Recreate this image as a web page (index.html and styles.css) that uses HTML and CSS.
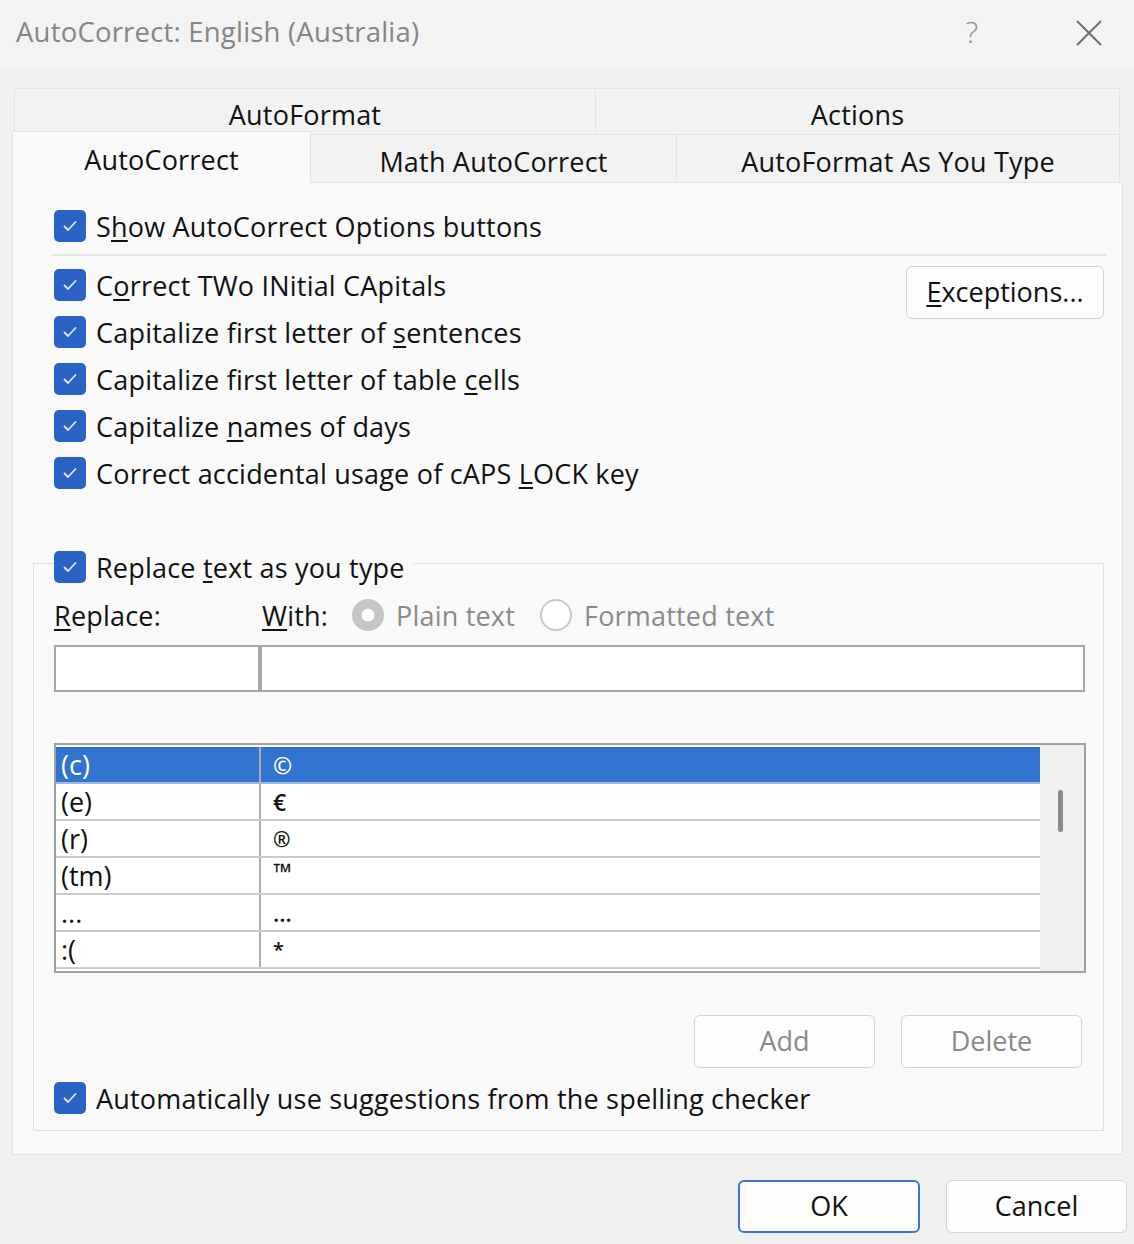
FILE: index.html
```html
<!DOCTYPE html>
<html lang="en">
<head>
<meta charset="utf-8">
<title>AutoCorrect: English (Australia)</title>
<link rel="stylesheet" href="styles.css">
</head>
<body>
<div class="dialog">
  <header class="titlebar">
    <span class="title">AutoCorrect: English (Australia)</span>
    <span class="help">?</span>
    <span class="close"><svg width="26" height="26" viewBox="0 0 26 26"><path d="M1 1 L25 25 M25 1 L1 25" stroke="#6f6f6f" stroke-width="2" fill="none"/></svg></span>
  </header>

  <div class="tabs">
    <div class="tabrow back">
      <div class="tab t-af">AutoFormat</div>
      <div class="tab t-act">Actions</div>
    </div>
    <div class="tabrow front">
      <div class="tab sel t-ac">AutoCorrect</div>
      <div class="tab t-math">Math AutoCorrect</div>
      <div class="tab t-afy">AutoFormat As You Type</div>
    </div>
  </div>

  <section class="panel">
    <div class="row">
      <span class="box"><svg width="32" height="32" viewBox="0 0 32 32"><polyline points="10.5,16.5 14,20 21.5,12" fill="none" stroke="#dfe9fb" stroke-width="1.8" stroke-linecap="round" stroke-linejoin="round"/></svg></span>
      <span>S<u>h</u>ow AutoCorrect Options buttons</span>
    </div>
    <div class="sep"></div>

    <div class="options">
      <div class="opt-list">
        <div class="row">
          <span class="box"><svg width="32" height="32" viewBox="0 0 32 32"><polyline points="10.5,16.5 14,20 21.5,12" fill="none" stroke="#dfe9fb" stroke-width="1.8" stroke-linecap="round" stroke-linejoin="round"/></svg></span>
          <span>C<u>o</u>rrect TWo INitial CApitals</span>
        </div>
        <div class="row">
          <span class="box"><svg width="32" height="32" viewBox="0 0 32 32"><polyline points="10.5,16.5 14,20 21.5,12" fill="none" stroke="#dfe9fb" stroke-width="1.8" stroke-linecap="round" stroke-linejoin="round"/></svg></span>
          <span>Capitalize first letter of <u>s</u>entences</span>
        </div>
        <div class="row">
          <span class="box"><svg width="32" height="32" viewBox="0 0 32 32"><polyline points="10.5,16.5 14,20 21.5,12" fill="none" stroke="#dfe9fb" stroke-width="1.8" stroke-linecap="round" stroke-linejoin="round"/></svg></span>
          <span>Capitalize first letter of table <u>c</u>ells</span>
        </div>
        <div class="row">
          <span class="box"><svg width="32" height="32" viewBox="0 0 32 32"><polyline points="10.5,16.5 14,20 21.5,12" fill="none" stroke="#dfe9fb" stroke-width="1.8" stroke-linecap="round" stroke-linejoin="round"/></svg></span>
          <span>Capitalize <u>n</u>ames of days</span>
        </div>
        <div class="row">
          <span class="box"><svg width="32" height="32" viewBox="0 0 32 32"><polyline points="10.5,16.5 14,20 21.5,12" fill="none" stroke="#dfe9fb" stroke-width="1.8" stroke-linecap="round" stroke-linejoin="round"/></svg></span>
          <span>Correct accidental usage of cAPS <u>L</u>OCK key</span>
        </div>
      </div>
      <button class="btn exc"><u>E</u>xceptions...</button>
    </div>

    <fieldset class="group">
      <legend class="legend">
        <span class="box"><svg width="32" height="32" viewBox="0 0 32 32"><polyline points="10.5,16.5 14,20 21.5,12" fill="none" stroke="#dfe9fb" stroke-width="1.8" stroke-linecap="round" stroke-linejoin="round"/></svg></span>
        <span>Replace <u>t</u>ext as you type</span>
      </legend>

      <div class="with-row">
        <span class="lbl-replace"><u>R</u>eplace:</span>
        <span class="lbl-with"><u>W</u>ith:</span>
        <span class="radio-opt r1"><span class="radio on"></span><span class="dim">Plain text</span></span>
        <span class="radio-opt"><span class="radio"></span><span class="dim">Formatted text</span></span>
      </div>

      <div class="inputs">
        <div class="in in1"></div>
        <div class="in in2"></div>
      </div>

      <div class="list">
        <div class="list-rows">
          <div class="lrow selected"><span class="c1">(c)</span><span class="c2 sym">©</span></div>
          <div class="lrow"><span class="c1">(e)</span><span class="c2 sym">€</span></div>
          <div class="lrow"><span class="c1">(r)</span><span class="c2 sym reg">®</span></div>
          <div class="lrow"><span class="c1">(tm)</span><span class="c2 sym tm">™</span></div>
          <div class="lrow"><span class="c1">...</span><span class="c2 sym">…</span></div>
          <div class="lrow"><span class="c1">:(</span><span class="c2 sym star">*</span></div>
        </div>
        <div class="scroll"><div class="thumb"></div></div>
      </div>

      <div class="btns">
        <button class="btn dis">Add</button>
        <button class="btn dis">Delete</button>
      </div>

      <div class="row auto-row">
        <span class="box"><svg width="32" height="32" viewBox="0 0 32 32"><polyline points="10.5,16.5 14,20 21.5,12" fill="none" stroke="#dfe9fb" stroke-width="1.8" stroke-linecap="round" stroke-linejoin="round"/></svg></span>
        <span>Automatically use su<u>g</u>gestions from the spelling checker</span>
      </div>
    </fieldset>
  </section>

  <footer class="footer">
    <button class="btn ok">OK</button>
    <button class="btn">Cancel</button>
  </footer>
</div>
</body>
</html>
```

FILE: styles.css
```css
* { box-sizing: border-box; }

body {
  margin: 0;
  background: #f0f0f0;
  font-family: "Open Sans", "Noto Sans", sans-serif;
  font-size: 27px;
  letter-spacing: 0.2px;
  color: #111;
}

.dialog {
  width: 1134px;
  height: 1244px;
  overflow: hidden;
}

u { text-underline-offset: 3px; text-decoration-thickness: 2px; }

/* Title bar */
.titlebar {
  height: 70px;
  background: #f3f3f3;
  display: flex;
  align-items: center;
  padding: 0 32px 8px 16px;
}
.title {
  flex: 1;
  color: #858585;
  font-size: 27.5px;
}
.help {
  width: 40px;
  text-align: center;
  color: #8f8f8f;
  font-size: 30px;
  font-weight: 300;
  margin-right: 84px;
}
.close { display: flex; width: 26px; height: 26px; margin-top: 4px; }

/* Tabs */
.tabs {
  margin-top: 18px;
  padding-left: 12px;
}
.tabrow { display: flex; }
.back { margin-left: 2px; height: 46px; }
.front { height: 48px; }
.tab {
  display: flex;
  align-items: center;
  justify-content: center;
  background: #f2f2f2;
  border-top: 1px solid #e3e3e3;
  border-right: 1px solid #e3e3e3;
  padding-top: 6px;
  color: #111;
}
.t-af { width: 582px; border-left: 1px solid #e3e3e3; }
.t-act { width: 524px; }
.t-ac { width: 299px; }
.t-math { width: 366px; }
.t-afy { width: 443px; }
.tab.sel {
  background: #f9f9f9;
  border: 1px solid #e1e1e1;
  border-bottom: none;
  margin-top: -3px;
  height: 52px;
  padding-top: 4px;
  padding-bottom: 0;
  position: relative;
  z-index: 1;
}

/* Panel */
.panel {
  margin-left: 12px;
  width: 1111px;
  height: 973px;
  background: #f9f9f9;
  border: 1px solid #e1e1e1;
  padding: 27px 15px 0 41px;
}

.row {
  display: flex;
  align-items: center;
  height: 32px;
  gap: 10px;
  white-space: nowrap;
}
.box {
  width: 32px;
  height: 32px;
  flex: none;
  border-radius: 5px;
  background: #2b62c5;
  display: flex;
}

.sep {
  height: 2px;
  background: #e4e4e4;
  margin: 12px 0 10px -2px;
}

.options {
  display: flex;
  justify-content: space-between;
  align-items: flex-start;
}
.opt-list {
  display: flex;
  flex-direction: column;
  gap: 15px;
  padding-top: 3px;
}

.btn {
  font: inherit;
  color: #111;
  background: #fdfdfd;
  border: 1px solid #d3d3d3;
  border-radius: 6px;
  height: 53px;
  width: 181px;
  padding: 0 0 3px;
}
.exc { width: 198px; margin-right: 3px; }
.btn.dis { color: #8a8a8a; }
.btn.ok { border: 2px solid #3c74cf; width: 182px; }

/* Group box */
.group {
  margin: 54px 3px 0 -21px;
  padding: 0 17px 16px 20px;
  border: 1px solid #dedede;
  min-width: 0;
}
.legend {
  display: flex;
  align-items: center;
  gap: 10px;
  padding: 8px 8px 0 0;
  height: 40px;
  white-space: nowrap;
}

.with-row {
  display: flex;
  align-items: center;
  height: 32px;
  margin-top: 16px;
  white-space: nowrap;
}
.lbl-replace { width: 208px; }
.lbl-with { width: 90px; }
.radio-opt { display: flex; align-items: center; gap: 12px; }
.r1 { width: 188px; }
.radio {
  width: 32px;
  height: 32px;
  border-radius: 50%;
  border: 2px solid #c9c9c9;
  background: #fff;
  flex: none;
}
.radio.on {
  border: none;
  background: radial-gradient(circle, #fdfdfd 0 6px, #c5c5c5 6.8px);
}
.dim { color: #8a8a8a; }

.inputs {
  display: flex;
  margin-top: 14px;
  height: 47px;
}
.in {
  background: #fff;
  border: 2px solid #a6a6a6;
  height: 47px;
}
.in1 { width: 206px; }
.in2 { flex: 1; margin-right: 1px; }

/* List */
.list {
  margin-top: 51px;
  height: 230px;
  border: 2px solid #a0a0a0;
  background: #fff;
  display: flex;
}
.list-rows {
  flex: 1;
  padding-top: 2px;
}
.lrow {
  display: grid;
  grid-template-columns: 205px 1fr;
  height: 37px;
  border-bottom: 2px solid #cbcbcb;
  align-items: stretch;
  letter-spacing: 0;
}
.lrow .c1 {
  padding-left: 5px;
  border-right: 2px solid #acacac;
  display: flex;
  align-items: center;
  line-height: 1;
}
.lrow .c2 {
  padding-left: 12px;
  display: flex;
  align-items: center;
}
.lrow.selected {
  background: #3174d0;
  color: #fff;
  border-bottom-color: #9cb9e3;
}
.sym { font-weight: 600; font-size: 23px; }
.sym.reg { font-size: 21px; }
.sym.tm { font-size: 24px; font-weight: 700; align-items: flex-start; padding-top: 0; line-height: 1.2; }
.sym.star { font-size: 20px; align-items: flex-start; padding-top: 4px; }

.scroll {
  width: 44px;
  background: #f0f0f0;
  padding: 45px 0 0 18px;
}
.thumb {
  width: 5px;
  height: 42px;
  border-radius: 3px;
  background: #8b8b8b;
}

.btns {
  display: flex;
  justify-content: flex-end;
  gap: 26px;
  margin-top: 42px;
  padding-right: 4px;
}

.auto-row { margin-top: 14px; }

/* Footer */
.footer {
  display: flex;
  justify-content: flex-end;
  gap: 26px;
  margin-top: 25px;
  padding-right: 7px;
}
```
